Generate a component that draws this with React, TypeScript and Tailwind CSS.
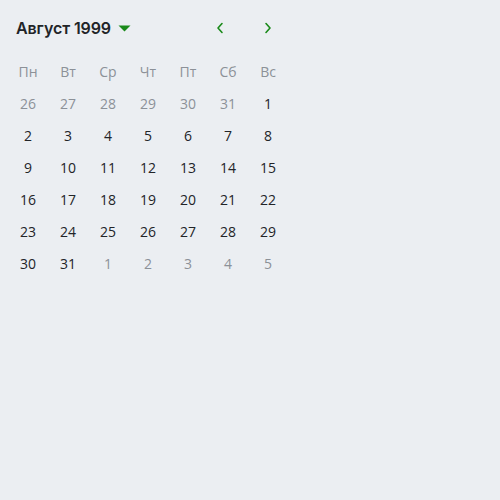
import React from "react";

const weekdays = ["Пн", "Вт", "Ср", "Чт", "Пт", "Сб", "Вс"];

type Day = { d: number; muted: boolean };

const days: Day[] = [
  ...[26, 27, 28, 29, 30, 31].map((d) => ({ d, muted: true })),
  ...Array.from({ length: 31 }, (_, i) => ({ d: i + 1, muted: false })),
  ...[1, 2, 3, 4, 5].map((d) => ({ d, muted: true })),
];

export default function App() {
  return (
    <div
      className="w-[500px] h-[500px] bg-[#ebeef2] p-2"
      style={{ fontFamily: '"Open Sans", "Noto Sans", sans-serif' }}
    >
      <div className="w-[280px]">
        <div className="flex h-10 items-center justify-between pl-2 pr-1">
          <div className="flex items-center gap-[7px]">
            <span
              className="text-[16px] font-semibold text-[#222428] tracking-[-0.1px]"
              style={{ fontFamily: 'Inter, "Open Sans", sans-serif' }}
            >
              Август 1999
            </span>
            <svg width="13" height="8" viewBox="0 0 13 8">
              <path d="M0.5 1.5 L12.5 1.5 L6.5 7.5 Z" fill="#1a8a1a" />
            </svg>
          </div>
          <div className="flex items-center gap-4">
            <button className="flex h-8 w-8 items-center justify-center">
              <svg width="8" height="12" viewBox="0 0 8 12">
                <path d="M6 1.5 L2 6 L6 10.5" fill="none" stroke="#1a8a1a" strokeWidth="1.6" strokeLinecap="round" strokeLinejoin="round" />
              </svg>
            </button>
            <button className="flex h-8 w-8 items-center justify-center">
              <svg width="8" height="12" viewBox="0 0 8 12">
                <path d="M2 1.5 L6 6 L2 10.5" fill="none" stroke="#1a8a1a" strokeWidth="1.6" strokeLinecap="round" strokeLinejoin="round" />
              </svg>
            </button>
          </div>
        </div>
        <div className="mt-2 grid grid-cols-7">
          {weekdays.map((w) => (
            <div key={w} className="flex h-8 items-center justify-center pb-[2px] text-[14px] text-[#8c9198]">
              {w}
            </div>
          ))}
          {days.map((x, i) => (
            <div
              key={i}
              className={
                "flex h-8 items-center justify-center pb-[2px] text-[14px] " +
                (x.muted ? "text-[#8c9198]" : "text-[#222428]")
              }
            >
              {x.d}
            </div>
          ))}
        </div>
      </div>
    </div>
  );
}
